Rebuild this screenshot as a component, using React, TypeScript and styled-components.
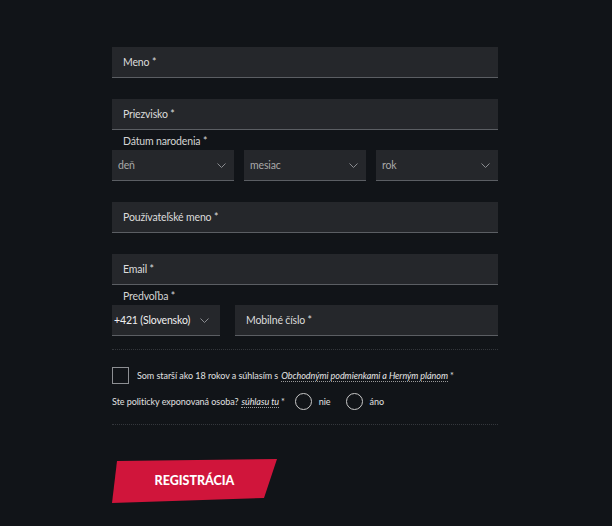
import React from "react";
import styled, { createGlobalStyle } from "styled-components";

const Global = createGlobalStyle`
  html, body { margin: 0; padding: 0; background: #111418; }
  body { font-family: Lato, "Open Sans", sans-serif; color: #d9d9d9; }
  * { box-sizing: border-box; }
`;

const Page = styled.div`
  width: 612px;
  min-height: 526px;
  background: #111418;
  padding: 47px 0 0 112px;
`;

const Form = styled.form`
  width: 386px;
  display: flex;
  flex-direction: column;
`;

const Input = styled.input<{ $gap?: number }>`
  display: block;
  width: 100%;
  height: 31px;
  margin: 0 0 ${(p) => p.$gap ?? 21}px 0;
  padding: 0 11px;
  background: #25272b;
  border: none;
  border-bottom: 1px solid #5b5e63;
  outline: none;
  color: #e6e6e6;
  font-family: Lato, "Open Sans", sans-serif;
  font-size: 10.5px;
  letter-spacing: -0.15px;
  &::placeholder { color: #dcdcdc; opacity: 1; }
`;

const Label = styled.div`
  height: 20px;
  padding: 5px 0 0 11px;
  font-size: 10.5px;
  letter-spacing: -0.15px;
  line-height: 12px;
  color: #d4d4d4;
`;

const Row = styled.div<{ $cols: string; $gap: number; $mb: number }>`
  display: grid;
  grid-template-columns: ${(p) => p.$cols};
  column-gap: ${(p) => p.$gap}px;
  margin-bottom: ${(p) => p.$mb}px;
`;

const Select = styled.div<{ $bright?: boolean }>`
  height: 31px;
  background: #25272b;
  border-bottom: 1px solid #5b5e63;
  display: flex;
  align-items: center;
  justify-content: space-between;
  padding: 0 ${(p) => (p.$bright ? 11 : 8)}px 0 ${(p) => (p.$bright ? 2 : 6)}px;
  font-size: 10.5px;
  letter-spacing: -0.15px;
  color: ${(p) => (p.$bright ? "#f0f0f0" : "#a9a9a9")};
`;

const Chevron = () => (
  <svg width="9" height="5" viewBox="0 0 9 5" fill="none">
    <path d="M0.5 0.5l4 4 4-4" stroke="#8a8c90" strokeWidth="1" />
  </svg>
);

const Divider = styled.div<{ $mt: number; $mb: number }>`
  height: 0;
  border-top: 1px dotted #34373c;
  margin: ${(p) => p.$mt}px 0 ${(p) => p.$mb}px 0;
`;

const Line = styled.div<{ $mb?: number }>`
  display: flex;
  align-items: center;
  height: 17px;
  font-size: 9px;
  letter-spacing: -0.05px;
  color: #e0e0e0;
  margin-bottom: ${(p) => p.$mb ?? 0}px;
  white-space: nowrap;
`;

const Box = styled.span`
  width: 17px;
  height: 17px;
  border: 1.5px solid #8d8f93;
  margin-right: 8px;
  flex: none;
`;

const Link = styled.a`
  font-style: italic;
  color: #e6e6e6;
  text-decoration: none;
  border-bottom: 1px dotted #9a9a9a;
  margin: 0 2px 0 3px;
  line-height: 11px;
`;

const Radio = styled.span<{ $ml: number }>`
  width: 17px;
  height: 17px;
  border-radius: 50%;
  border: 1.5px solid #c9c9c9;
  margin: 0 7px 0 ${(p) => p.$ml}px;
  flex: none;
`;

const Button = styled.button`
  width: 165px;
  height: 45px;
  border: none;
  background: #d0153b;
  clip-path: polygon(5px 2px, 165px 0, 152px 39px, 0 44px);
  color: #ffffff;
  font-family: Lato, "Open Sans", sans-serif;
  font-weight: 900;
  font-size: 12.5px;
  padding: 0 0 2px 0;
  cursor: pointer;
`;

export default function App() {
  return (
    <>
      <Global />
      <Page>
        <Form>
          <Input placeholder="Meno *" />
          <Input placeholder="Priezvisko *" $gap={0} />
          <Label>Dátum narodenia *</Label>
          <Row $cols="1fr 1fr 1fr" $gap={10} $mb={21}>
            <Select>deň<Chevron /></Select>
            <Select>mesiac<Chevron /></Select>
            <Select>rok<Chevron /></Select>
          </Row>
          <Input placeholder="Používateľské meno *" />
          <Input placeholder="Email *" $gap={0} />
          <Label>Predvoľba *</Label>
          <Row $cols="108px 1fr" $gap={15} $mb={0}>
            <Select $bright>+421 (Slovensko)<Chevron /></Select>
            <Input placeholder="Mobilné číslo *" $gap={0} />
          </Row>
          <Divider $mt={13} $mb={17} />
          <Line $mb={9}>
            <Box />
            Som starší ako 18 rokov a súhlasím s
            <Link>Obchodnými podmienkami a Herným plánom</Link>*
          </Line>
          <Line>
            Ste politicky exponovaná osoba?
            <Link>súhlasu tu</Link>*
            <Radio $ml={10} />nie
            <Radio $ml={15} />áno
          </Line>
          <Divider $mt={14} $mb={34} />
          <Button type="button">REGISTRÁCIA</Button>
        </Form>
      </Page>
    </>
  );
}
